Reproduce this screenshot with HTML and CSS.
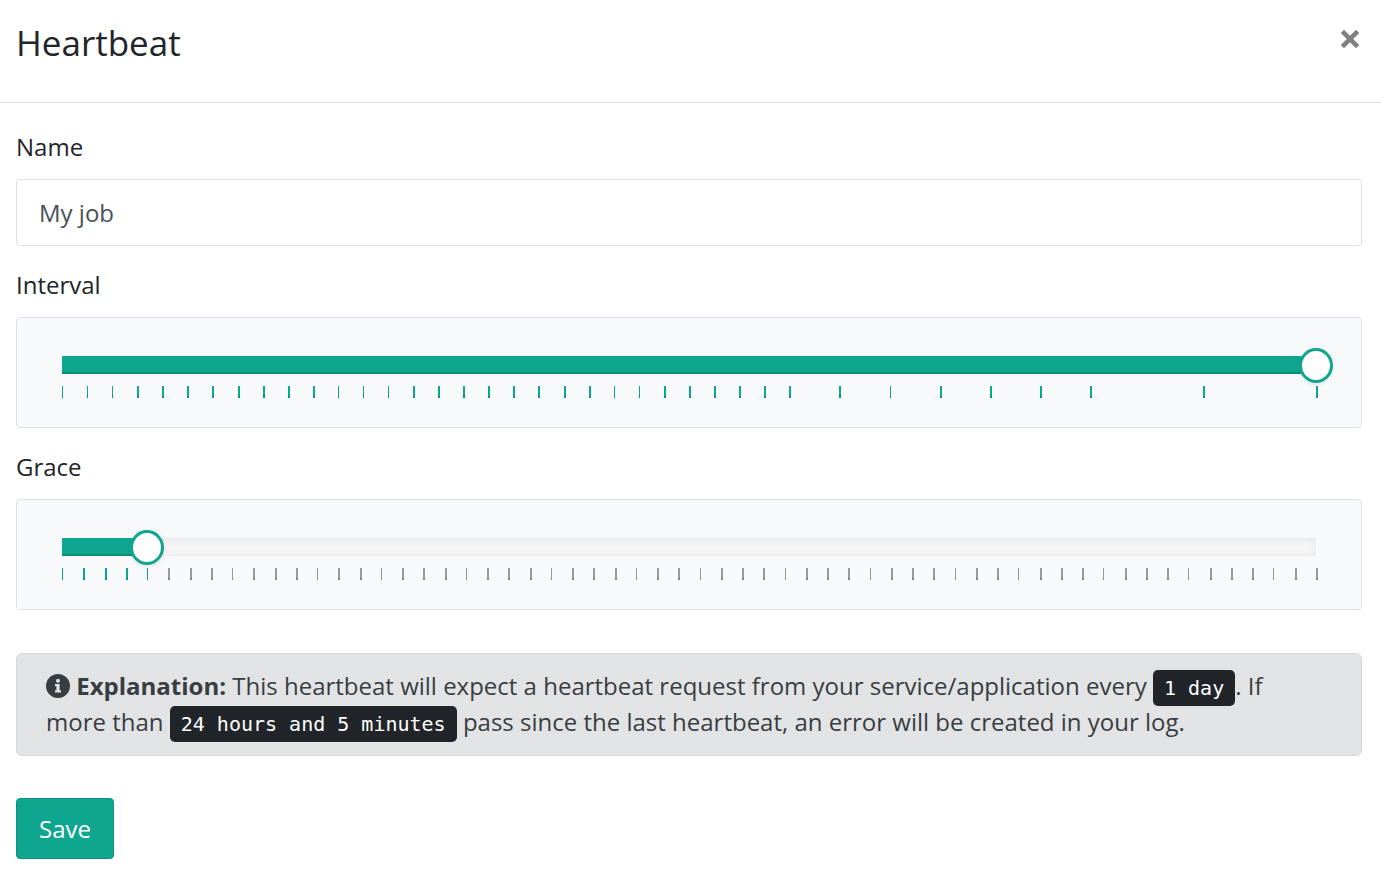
FILE: index.html
```html
<!DOCTYPE html>
<html lang="en">
<head>
<meta charset="utf-8">
<meta name="viewport" content="width=device-width, initial-scale=1">
<title>Heartbeat</title>
<link rel="stylesheet" href="styles.css">
</head>
<body>
<header class="header">
  <h1 class="title">Heartbeat</h1>
  <button class="close" type="button" aria-label="Close">
    <svg class="close-icon" viewBox="0 0 20 20" aria-hidden="true"><path d="M2.4 2.4 17.6 17.6M17.6 2.4 2.4 17.6" fill="none" stroke="currentColor" stroke-width="4.6"/></svg>
  </button>
</header>
<form class="form">
  <div class="field">
    <label class="label" for="name">Name</label>
    <input class="input" id="name" type="text" value="My job">
  </div>
  <div class="field">
    <label class="label" for="interval">Interval</label>
    <div class="panel">
      <div class="slider">
        <div class="track"><div class="fill" style="width:100%"></div></div>
        <input class="range" id="interval" type="range" min="0" max="100" value="100">
      </div>
      <div class="ticks" id="interval-ticks"></div>
    </div>
  </div>
  <div class="field">
    <label class="label" for="grace">Grace</label>
    <div class="panel">
      <div class="slider">
        <div class="track"><div class="fill" style="width:6.78%"></div></div>
        <input class="range" id="grace" type="range" min="0" max="59" value="4">
      </div>
      <div class="ticks" id="grace-ticks"></div>
    </div>
  </div>
  <p class="alert"><svg class="info-icon" viewBox="0 0 24 24" aria-hidden="true"><circle cx="12" cy="12" r="12" fill="currentColor"/><circle cx="12" cy="6.8" r="2" fill="#e2e3e5"/><path d="M9 10h4.6v6.2H15v2.3H9v-2.3h1.4v-3.9H9z" fill="#e2e3e5"/></svg> <strong>Explanation:</strong> This heartbeat will expect a heartbeat request from your service/application every <kbd class="value">1 day</kbd>. If more than <kbd class="value">24 hours and 5 minutes</kbd> pass since the last heartbeat, an error will be created in your log.</p>
  <button class="save" type="button">Save</button>
</form>
<script src="ticks.js"></script>
</body>
</html>
```
FILE: styles.css
```css
* {
  box-sizing: border-box;
}

body {
  margin: 0;
  background: #fff;
  color: #212529;
  font: 24px/36px "Open Sans", sans-serif;
}

.header {
  display: flex;
  justify-content: space-between;
  align-items: flex-start;
  padding: 16px 16px 33px;
  border-bottom: 1px solid #dee2e6;
}

.title {
  margin: 0;
  font-size: 35px;
  line-height: 53px;
  font-weight: 400;
}

.close {
  display: flex;
  padding: 13px 5px;
  border: 0;
  background: none;
  color: #808080;
}

.close-icon {
  width: 20px;
  height: 20px;
}

.form {
  padding: 26px 19px 31px 16px;
}

.field {
  margin-bottom: 21px;
}

.label {
  display: block;
  margin-bottom: 14px;
}

.input {
  display: block;
  width: 100%;
  height: 67px;
  padding: 0 22px;
  border: 1px solid #dce0ec;
  border-radius: 4px;
  background: #fff;
  color: #495057;
  font: inherit;
}

.panel {
  padding: 30px 45px 29px;
  border: 1px solid #dee2e6;
  border-radius: 4px;
  background: #f8f9fb;
}

.slider {
  display: grid;
  height: 35px;
}

.track,
.range {
  grid-area: 1 / 1;
}

.track {
  height: 18px;
  margin-top: 8px;
  background: #f6f6f6;
  box-shadow: inset 0 1px 8px rgba(0, 0, 0, 0.08);
}

.fill {
  height: 100%;
  background: #0fa68f;
  box-shadow: inset 0 -2px 0 rgba(0, 0, 0, 0.14);
}

.range {
  appearance: none;
  width: calc(100% + 34px);
  height: 35px;
  margin: 0 -17px;
  background: none;
}

.range::-webkit-slider-thumb {
  appearance: none;
  width: 34px;
  height: 35px;
  border: 3px solid #0fa68f;
  border-radius: 50%;
  background: #fff;
  box-shadow: 0 1px 4px rgba(0, 0, 0, 0.1);
}

.ticks {
  display: flex;
  height: 12px;
  margin: 3px -2px 0 0;
}

.tick::before {
  content: "";
  display: block;
  width: 2px;
  height: 12px;
  background: #96989a;
  box-shadow: inset 0 -2px 0 rgba(0, 0, 0, 0.12);
}

.tick-active::before {
  background: #0fa68f;
}

.tick-hairline::before {
  width: 1px;
}

.alert {
  margin: 43px 0 42px;
  padding: 14px 40px 15px 29px;
  border: 1px solid #d6d8db;
  border-radius: 6px;
  background: #e2e3e5;
  color: #383d41;
}

.info-icon {
  width: 24px;
  height: 24px;
  vertical-align: -3px;
}

.value {
  padding: 6px 11px;
  border-radius: 5px;
  background: #212529;
  color: #fff;
  font-family: "DejaVu Sans Mono", monospace;
  font-size: 20px;
  line-height: 24px;
}

.save {
  display: block;
  height: 61px;
  padding: 0 22px;
  border: 1px solid #0d917d;
  border-radius: 4px;
  background: #0fa68f;
  color: #fff;
  font: inherit;
}
```
FILE: ticks.js
```js
// Fills a slider's scale; each step is the relative distance to the next tick.
function drawTicks(id, steps, activeCount, hairlines) {
  const scale = document.getElementById(id);
  for (let i = 0; i <= steps.length; i++) {
    const tick = document.createElement("span");
    tick.className = "tick";
    if (i < activeCount) tick.classList.add("tick-active");
    if (hairlines.includes(i)) tick.classList.add("tick-hairline");
    tick.style.flex = i < steps.length ? steps[i] + " 1 0" : "none";
    scale.append(tick);
  }
}

drawTicks(
  "interval-ticks",
  [...Array(29).fill(2), ...Array(6).fill(4), 9, 9],
  38,
  [0, 1, 2, 11, 12, 13, 22, 23, 31]
);
drawTicks(
  "grace-ticks",
  Array(59).fill(1),
  5,
  [0, 4, 8, 12, 15, 19, 23, 27, 30, 34, 38, 42, 45, 49, 53, 57]
);
```
